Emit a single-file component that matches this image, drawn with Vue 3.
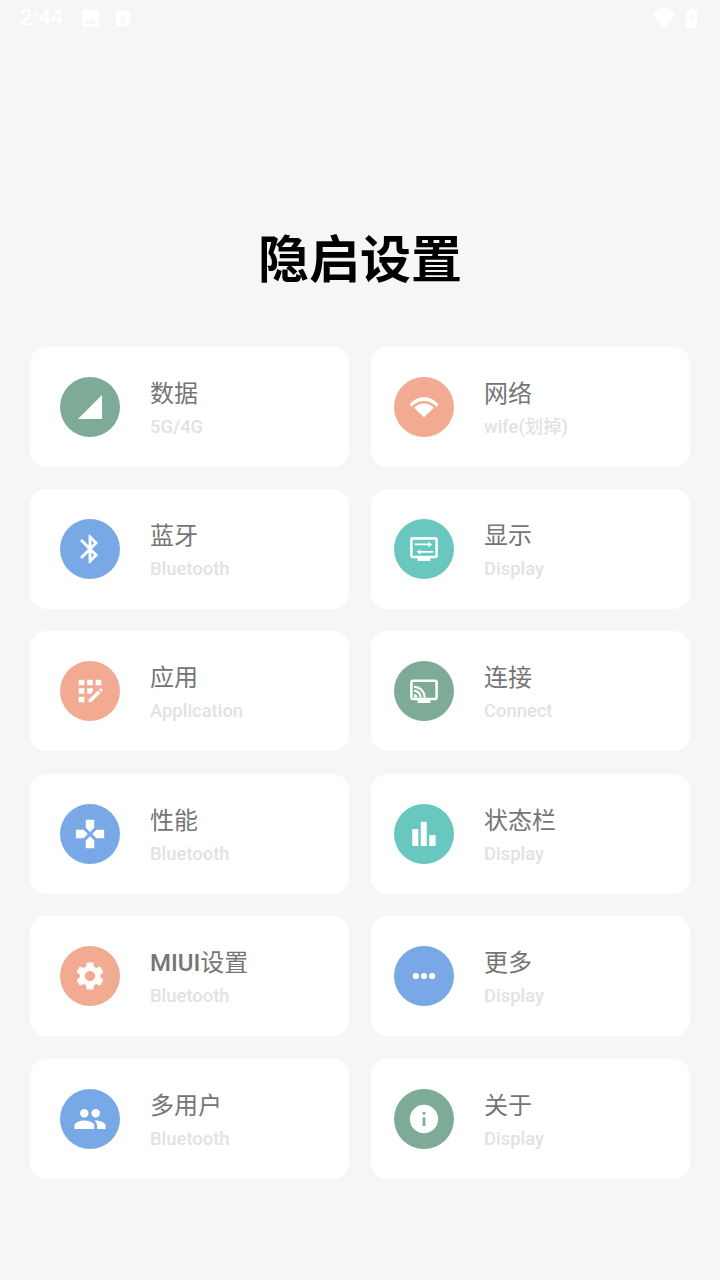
<script setup>
const cards = [
  { t: '数据', s: '5G/4G', c: '#7dab97', i: 'signal' },
  { t: '网络', s: 'wife(划掉)', c: '#f2aa93', i: 'wifi' },
  { t: '蓝牙', s: 'Bluetooth', c: '#78a9e6', i: 'bt' },
  { t: '显示', s: 'Display', c: '#68c7be', i: 'display' },
  { t: '应用', s: 'Application', c: '#f2aa93', i: 'app' },
  { t: '连接', s: 'Connect', c: '#7dab97', i: 'cast' },
  { t: '性能', s: 'Bluetooth', c: '#78a9e6', i: 'game' },
  { t: '状态栏', s: 'Display', c: '#68c7be', i: 'bars' },
  { l: 'MIUI', t: '设置', s: 'Bluetooth', c: '#f2aa93', i: 'gear' },
  { t: '更多', s: 'Display', c: '#78a9e6', i: 'more' },
  { t: '多用户', s: 'Bluetooth', c: '#78a9e6', i: 'people' },
  { t: '关于', s: 'Display', c: '#7dab97', i: 'info' },
]
const paths = {
  signal: 'M3.500 20.500h17v-17z',
  wifi: 'M1.800 10.200C7.500 3.400 16.500 3.400 22.200 10.200L20.800 11.800C15.800 6.400 8.200 6.400 3.200 11.800zM5 12.600C9.200 8.600 14.800 8.600 19 12.600L12 19.300z',
  bt: 'M17.710 7.710L12 2h-1v7.590L6.410 5 5 6.410 10.590 12 5 17.590 6.410 19 11 14.410V22h1l5.710-5.710-4.300-4.290 4.300-4.290zM13 5.830l1.880 1.880L13 9.590V5.830zm1.880 10.460L13 18.170v-3.760l1.880 1.880z',
  display: 'M4 3.600h16c1 0 1.800.8 1.800 1.800v11.400c0 1-.8 1.800-1.800 1.800h-3.500v1.800h-9v-1.800H4c-1 0-1.800-.8-1.800-1.800V5.400c0-1 .8-1.800 1.800-1.800zm0 1.800v11.400h16V5.400H4zM5.500 8.200h9.500V6.900l2.800 1.900-2.800 1.900V9.400H5.500zM18.500 13.400H9.500v-1.300l-2.800 1.900 2.800 1.900v-1.300h9z',
  app: 'M10 4h4v4h-4zM4 16h4v4H4zm0-6h4v4H4zm0-6h4v4H4zm10 8.420V10h-4v4h2.420zm6.880-1.130l-1.170-1.170c-.16-.16-.42-.16-.58 0l-.88.88L20 12.750l.88-.88c.16-.16.16-.42 0-.58zM11 18.250V20h1.750l6.670-6.670-1.750-1.750zM16 4h4v4h-4z',
  cast: 'M4 3.800h16c1 0 1.800.8 1.800 1.800v11.200c0 1-.8 1.800-1.800 1.800h-3.500v1.800h-9v-1.800H4c-1 0-1.800-.8-1.800-1.800V5.600c0-1 .8-1.800 1.800-1.800zm0 1.800v11.200h16V5.600H4zM5 16.500v-2.400c1.300 0 2.400 1.100 2.400 2.400zM5 12.700v-1.500c2.900 0 5.300 2.400 5.300 5.300H8.800C8.800 14.400 7.100 12.700 5 12.700zM5 9.800V8.300c4.500 0 8.200 3.700 8.200 8.200h-1.500C11.700 12.800 8.700 9.800 5 9.800z',
  game: 'M15 7.500V2H9v5.500l3 3 3-3zM7.500 9H2v6h5.500l3-3-3-3zM9 16.500V22h6v-5.500l-3-3-3 3zM16.500 9l-3 3 3 3H22V9h-5.500z',
  bars: 'M3.700 8.500h4.300v12H3.700zM9.700 3.300h4.200v17.200H9.700zM15.700 12.700h4.500v7.800h-4.500z',
  gear: 'M19.140 12.940c.04-.3.060-.61.060-.94 0-.32-.02-.64-.07-.94l2.030-1.580c.18-.14.230-.41.120-.61l-1.920-3.320c-.12-.22-.37-.29-.59-.22l-2.390.96c-.5-.38-1.030-.7-1.620-.94l-.36-2.540c-.04-.24-.24-.41-.48-.41h-3.840c-.24 0-.43.170-.47.410l-.36 2.540c-.59.240-1.130.570-1.620.94l-2.390-.96c-.22-.08-.47 0-.59.220L2.740 8.870c-.12.210-.08.470.12.610l2.030 1.580c-.05.300-.09.630-.09.940s.02.640.07.940l-2.030 1.580c-.18.140-.23.410-.12.610l1.920 3.320c.12.220.37.290.59.220l2.390-.96c.5.380 1.030.7 1.620.94l.36 2.540c.05.240.24.410.48.410h3.840c.24 0 .44-.17.470-.41l.36-2.540c.59-.24 1.130-.56 1.620-.94l2.390.96c.22.080.47 0 .59-.22l1.920-3.320c.12-.22.070-.47-.12-.61l-2.010-1.580zM12 15.600c-1.980 0-3.600-1.620-3.600-3.600s1.620-3.600 3.600-3.600 3.600 1.620 3.600 3.600-1.620 3.600-3.600 3.600z',
  more: 'M6.200 9.800a2.200 2.200 0 1 0 0 4.400 2.200 2.200 0 0 0 0-4.400zM12 9.800a2.200 2.200 0 1 0 0 4.400 2.200 2.200 0 0 0 0-4.400zM17.800 9.800a2.200 2.200 0 1 0 0 4.400 2.200 2.200 0 0 0 0-4.400z',
  people: 'M16 11c1.660 0 2.990-1.340 2.990-3S17.660 5 16 5c-1.660 0-3 1.340-3 3s1.340 3 3 3zm-8 0c1.660 0 2.990-1.340 2.990-3S9.660 5 8 5C6.340 5 5 6.340 5 8s1.340 3 3 3zm0 2c-2.330 0-7 1.170-7 3.500V19h14v-2.500c0-2.330-4.670-3.500-7-3.500zm8 0c-.29 0-.62.020-.97.050 1.160.84 1.970 1.970 1.970 3.450V19h6v-2.500c0-2.330-4.670-3.500-7-3.500z',
  info: 'M12 2C6.480 2 2 6.480 2 12s4.480 10 10 10 10-4.480 10-10S17.520 2 12 2zm1 15h-2v-6h2v6zm0-8h-2V7h2v2z',
}
</script>

<template>
  <main class="page">
    <header class="status">
      <span class="time">2:44</span>
      <svg class="st-img" viewBox="0 0 17 17"><path fill-rule="evenodd" d="M1 0h15a1 1 0 0 1 1 1v15a1 1 0 0 1-1 1H1a1 1 0 0 1-1-1V1a1 1 0 0 1 1-1zM2.500 14h12l-3.700-5.500-3 4-2-2.300z" /></svg>
      <svg class="st-sim" viewBox="0 0 14 15"><path fill-rule="evenodd" d="M1 0h12a1 1 0 0 1 1 1v13a1 1 0 0 1-1 1H1a1 1 0 0 1-1-1V1a1 1 0 0 1 1-1zM7 2.500 4 11h1.500l.5-1.600h2L8.500 11H10zM6.400 8 7 5.800 7.600 8zM4 12h6v1H4z" /></svg>
      <span class="spacer"></span>
      <svg class="st-wifi" viewBox="0 0 22 20"><path d="M0 5.500C6-1.800 16-1.800 22 5.500L11 20z" /></svg>
      <svg class="st-bat" viewBox="0 0 11 20"><path fill-rule="evenodd" d="M3.500 0h4v2H10a1 1 0 0 1 1 1v17H0V3a1 1 0 0 1 1-1h2.500zM6.500 4 3.500 11h2v5l2.500-7H6z" /></svg>
    </header>

    <h1 class="title">隐启设置</h1>

    <section class="grid">
      <article v-for="card in cards" :key="card.s + card.t" class="card">
        <div class="badge" :style="{ background: card.c }">
          <svg class="icon" viewBox="0 0 24 24">
            <path :d="paths[card.i]" fill-rule="evenodd" fill="#fff" />
          </svg>
        </div>
        <div class="text">
          <div class="name"><span v-if="card.l" class="latin">{{ card.l }}</span>{{ card.t }}</div>
          <div class="sub">{{ card.s }}</div>
        </div>
      </article>
    </section>
  </main>
</template>

<style>
html, body { margin: 0; background: #f6f6f6; }
</style>

<style scoped>
.page {
  width: 720px;
  height: 1280px;
  background: #f6f6f6;
  font-family: Roboto, "Noto Sans CJK SC", sans-serif;
  overflow: hidden;
}
.status {
  height: 36px;
  display: flex;
  align-items: center;
  padding: 0 23px 0 20px;
  color: #fff;
  fill: #fff;
}
.time { font-size: 22px; font-weight: 500; line-height: 36px; width: 62px; }
.st-img { width: 17px; height: 17px; margin-right: 17px; }
.st-sim { width: 14px; height: 15px; }
.spacer { flex: 1; }
.st-wifi { width: 22px; height: 20px; margin-right: 11px; }
.st-bat { width: 11px; height: 20px; }
.title {
  margin: 180px 0 0;
  height: 80px;
  line-height: 80px;
  text-align: center;
  font-size: 51px;
  font-weight: 700;
  color: #000;
  font-family: "Noto Sans CJK SC", sans-serif;
}
.grid {
  margin-top: 50.7px;
  padding: 0 30px;
  display: grid;
  grid-template-columns: 319px 319px;
  column-gap: 22px;
  grid-auto-rows: 120px;
  row-gap: 22.4px;
}
.card {
  background: #fff;
  border-radius: 16px;
  display: flex;
  align-items: center;
  padding-left: 30px;
  gap: 30px;
}
.card:nth-child(even) { padding-left: 23px; }
.badge {
  width: 60px;
  height: 60px;
  border-radius: 50%;
  display: flex;
  align-items: center;
  justify-content: center;
  flex: none;
}
.icon { width: 34px; height: 34px; display: block; }
.text { display: flex; flex-direction: column; gap: 5px; padding-top: 3px; }
.name { font-size: 24px; line-height: 32px; color: #757575; }
.latin { font-weight: 500; }
.sub { font-size: 18.4px; line-height: 24px; font-weight: 500; color: #e2e2e2; }
</style>
